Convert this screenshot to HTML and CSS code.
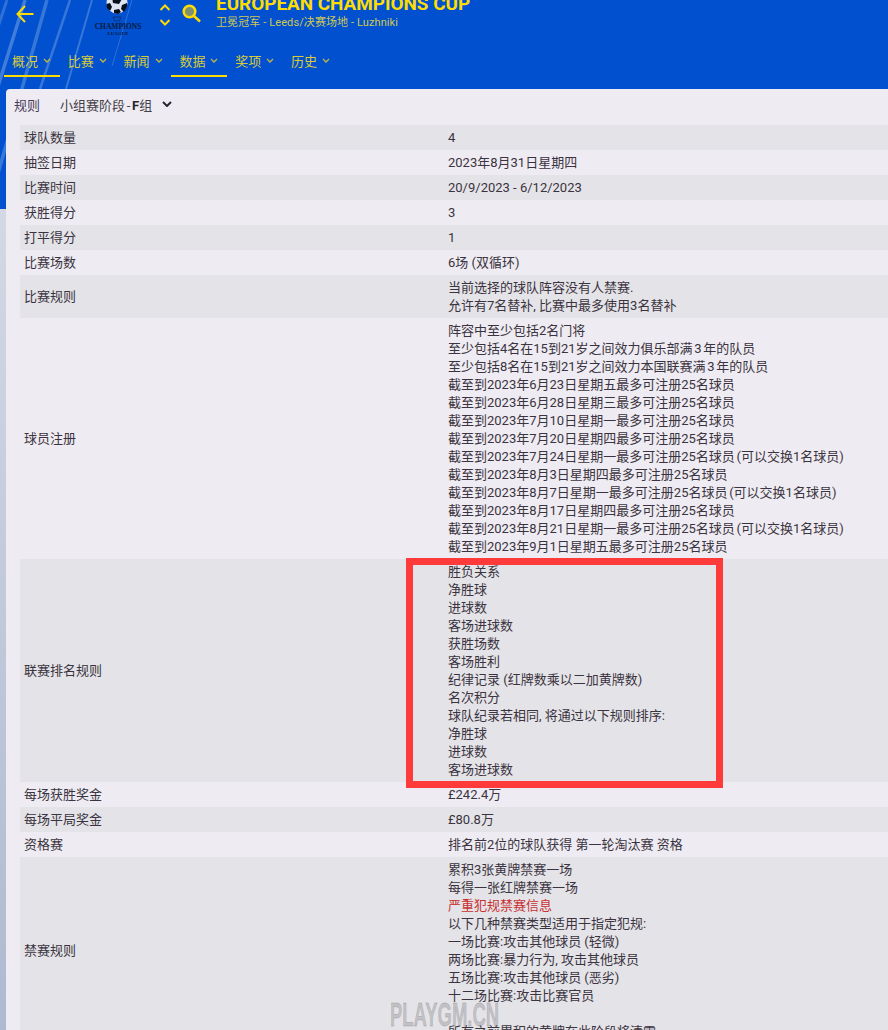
FILE: index.html
```html
<!DOCTYPE html>
<html lang="zh-CN">
<head>
  <meta charset="UTF-8">
  <title>European Champions Cup</title>
  <link rel="stylesheet" href="styles.css">
</head>
<body>
  <div class="page">
    <!-- 背景斜线 -->
    <svg class="stripes" width="200" height="209" viewBox="0 0 200 209">
      <g stroke="#9fc0e8" fill="none">
        <line x1="7" y1="0" x2="-3" y2="30" stroke-width="3" opacity="0.3"/>
        <line x1="25" y1="0" x2="-25" y2="160" stroke-width="3.500" opacity="0.4"/>
        <line x1="47" y1="0" x2="-12" y2="209" stroke-width="3.500" opacity="0.35"/>
        <line x1="70" y1="0" x2="40" y2="89" stroke-width="2.500" opacity="0.35"/>
        <line x1="92" y1="0" x2="66" y2="89" stroke-width="2" opacity="0.35"/>
        <line x1="132" y1="0" x2="112" y2="66" stroke-width="1" opacity="0.3"/>
      </g>
    </svg>

    <header class="top">
      <div class="top-row">
        <svg class="back-icon" width="18" height="18" viewBox="0 0 18 18">
          <path d="M9 1 L1.500 9 L9 17 M1.500 9 H17.500" fill="none" stroke="#ffdc00" stroke-width="2"/>
        </svg>
        <svg class="logo" width="50" height="36" viewBox="0 0 50 36">
          <circle cx="23" cy="3" r="10.500" fill="#dfe5f0"/>
          <path d="M18 -3 l6 -2 l4 4 l-3 5 l-6 -1 z" fill="#0a0f1e"/>
          <path d="M12.500 4 l3.500 -1 l2 4 l-2 4 l-3 -3 z" fill="#0a0f1e"/>
          <path d="M28 5 l5 -2 l0 4 l-3 5 l-3 -3 z" fill="#0a0f1e"/>
          <path d="M20 10 l5 -1 l2 3 l-3 2 l-4 -1 z" fill="#0a0f1e"/>
          <path d="M19 17 h8 l-1.500 4 h-5 z" fill="none" stroke="#1a2a55" stroke-width="0.700"/>
          <text class="logo-big" x="24" y="29" text-anchor="middle">CHAMPIONS</text>
          <text class="logo-small" x="24" y="34.500" text-anchor="middle">LEAGUE</text>
        </svg>
        <svg class="updown" width="12" height="22" viewBox="0 0 12 22">
          <path d="M1.500 6 L6 1.500 L10.500 6 M1.500 16 L6 20.500 L10.500 16" fill="none" stroke="#ffdc00" stroke-width="2"/>
        </svg>
        <svg class="search-icon" width="19" height="19" viewBox="0 0 19 19">
          <circle cx="7.500" cy="7.500" r="5.800" fill="#7f9070" stroke="#ffdc00" stroke-width="2.500"/>
          <line x1="12" y1="12" x2="18" y2="17.500" stroke="#ffdc00" stroke-width="2.500"/>
        </svg>
        <div class="title-box">
          <div class="title">EUROPEAN CHAMPIONS CUP</div>
          <div class="subtitle">卫冕冠军 - Leeds/决赛场地 - Luzhniki</div>
        </div>
      </div>
      <nav class="tabs">
        <div class="tab active">概况<svg class="chev" width="8" height="5" viewBox="0 0 8 5"><path d="M1 1 L4 4 L7 1" /></svg></div>
        <div class="tab">比赛<svg class="chev" width="8" height="5" viewBox="0 0 8 5"><path d="M1 1 L4 4 L7 1" /></svg></div>
        <div class="tab">新闻<svg class="chev" width="8" height="5" viewBox="0 0 8 5"><path d="M1 1 L4 4 L7 1" /></svg></div>
        <div class="tab active">数据<svg class="chev" width="8" height="5" viewBox="0 0 8 5"><path d="M1 1 L4 4 L7 1" /></svg></div>
        <div class="tab">奖项<svg class="chev" width="8" height="5" viewBox="0 0 8 5"><path d="M1 1 L4 4 L7 1" /></svg></div>
        <div class="tab">历史<svg class="chev" width="8" height="5" viewBox="0 0 8 5"><path d="M1 1 L4 4 L7 1" /></svg></div>
      </nav>
    </header>

    <main class="card">
      <div class="card-head">
        <span class="card-label">规则</span>
        <span class="stage">小组赛阶段 - <b>F</b>组</span>
        <svg class="stage-chev" width="10" height="6" viewBox="0 0 10 6"><path d="M1 1 L5 5 L9 1" fill="none" stroke="#2a2530" stroke-width="2"/></svg>
      </div>

      <div class="rules">
        <div class="row"><div>球队数量</div><div>4</div></div>
        <div class="row"><div>抽签日期</div><div>2023年8月31日星期四</div></div>
        <div class="row"><div>比赛时间</div><div>20/9/2023 - 6/12/2023</div></div>
        <div class="row"><div>获胜得分</div><div>3</div></div>
        <div class="row"><div>打平得分</div><div>1</div></div>
        <div class="row"><div>比赛场数</div><div>6场 (双循环)</div></div>
        <div class="row">
          <div>比赛规则</div>
          <div>当前选择的球队阵容没有人禁赛.<br>允许有7名替补, 比赛中最多使用3名替补</div>
        </div>
        <div class="row">
          <div>球员注册</div>
          <div>
            阵容中至少包括2名门将<br>
            <span class="tight">至少包括4名在15到21岁之间效力俱乐部满 3 年的队员</span><br>
            <span class="tight">至少包括8名在15到21岁之间效力本国联赛满 3 年的队员</span><br>
            截至到2023年6月23日星期五最多可注册25名球员<br>
            截至到2023年6月28日星期三最多可注册25名球员<br>
            截至到2023年7月10日星期一最多可注册25名球员<br>
            截至到2023年7月20日星期四最多可注册25名球员<br>
            <span class="tight">截至到2023年7月24日星期一最多可注册25名球员 (可以交换1名球员)</span><br>
            截至到2023年8月3日星期四最多可注册25名球员<br>
            <span class="tight">截至到2023年8月7日星期一最多可注册25名球员 (可以交换1名球员)</span><br>
            截至到2023年8月17日星期四最多可注册25名球员<br>
            <span class="tight">截至到2023年8月21日星期一最多可注册25名球员 (可以交换1名球员)</span><br>
            截至到2023年9月1日星期五最多可注册25名球员
          </div>
        </div>
        <div class="row">
          <div>联赛排名规则</div>
          <div>
            胜负关系<br>
            净胜球<br>
            进球数<br>
            客场进球数<br>
            获胜场数<br>
            客场胜利<br>
            纪律记录 (红牌数乘以二加黄牌数)<br>
            名次积分<br>
            球队纪录若相同, 将通过以下规则排序:<br>
            净胜球<br>
            进球数<br>
            客场进球数
          </div>
        </div>
        <div class="row"><div>每场获胜奖金</div><div>£242.4万</div></div>
        <div class="row"><div>每场平局奖金</div><div>£80.8万</div></div>
        <div class="row"><div>资格赛</div><div>排名前2位的球队获得 第一轮淘汰赛 资格</div></div>
        <div class="row">
          <div>禁赛规则</div>
          <div>
            累积3张黄牌禁赛一场<br>
            每得一张红牌禁赛一场<br>
            <span class="red-link">严重犯规禁赛信息</span><br>
            以下几种禁赛类型适用于指定犯规:<br>
            一场比赛:攻击其他球员 (轻微)<br>
            两场比赛:暴力行为, 攻击其他球员<br>
            五场比赛:攻击其他球员 (恶劣)<br>
            十二场比赛:攻击比赛官员<br>
            <br>
            所有之前累积的黄牌在此阶段将清零
          </div>
        </div>
      </div>
    </main>

    <!-- 红框标注 + 水印 -->
    <div class="red-box"></div>
    <div class="watermark">PLAYGM.CN</div>
  </div>
</body>
</html>
```

FILE: styles.css
```css
* {
  box-sizing: border-box;
}
html, body {
  margin: 0;
  padding: 0;
}
body {
  font-family: Roboto, "Noto Sans CJK SC", sans-serif;
  font-size: 13px;
  color: #3b3340;
}
.page {
  position: relative;
  width: 888px;
  height: 1030px;
  overflow: hidden;
  background: linear-gradient(180deg, #0050d0 0, #0050d0 209px, #d3d8e4 209px, #aebad0 100%);
}
.stripes {
  position: absolute;
  left: 0;
  top: 0;
}

/* 顶部 */
.top {
  position: relative;
  height: 89px;
}
.top-row {
  display: flex;
  align-items: flex-start;
  height: 45px;
  padding-left: 16px;
}
.back-icon {
  margin-top: 5px;
}
.logo {
  margin-left: 60px;
}
.logo-big {
  font-family: "Liberation Serif", serif;
  font-size: 7.500px;
  font-weight: bold;
  fill: #0a1a3c;
}
.logo-small {
  font-family: "Liberation Serif", serif;
  font-size: 5px;
  font-weight: bold;
  fill: #0a1a3c;
}
.updown {
  margin-left: 15px;
  margin-top: 4px;
}
.search-icon {
  margin-left: 11px;
  margin-top: 4px;
}
.title-box {
  margin-left: 15px;
  margin-top: -7px;
}
.title {
  font-size: 18.900px;
  font-weight: bold;
  line-height: 22px;
  color: #ffdc00;
  white-space: nowrap;
}
.subtitle {
  font-size: 11px;
  line-height: 14px;
  margin-top: 1px;
  letter-spacing: 0.100px;
  color: #cfc850;
  white-space: nowrap;
}
.tabs {
  display: flex;
  padding-left: 4px;
}
.tab {
  display: flex;
  align-items: center;
  width: 55.800px;
  height: 32px;
  padding-left: 8px;
  padding-top: 1px;
  gap: 5px;
  color: #d8cc38;
  border-bottom: 2px solid transparent;
}
.tab.active {
  border-bottom-color: #ffdc00;
}
.chev path {
  fill: none;
  stroke: #c0b840;
  stroke-width: 1.300;
}

/* 内容卡片 */
.card {
  position: relative;
  margin-left: 6px;
  background: #eeecf2;
  border-top-left-radius: 4px;
}
.card-head {
  display: flex;
  align-items: center;
  height: 36px;
  padding-left: 8px;
  padding-bottom: 6px;
}
.card-label {
  width: 46px;
  color: #4a3a5a;
}
.stage {
  color: #444048;
  word-spacing: -1.500px;
}
.stage b {
  color: #2a2530;
}
.stage-chev {
  margin-left: 10px;
}
.rules {
  margin-left: 14px;
}
.row {
  display: grid;
  grid-template-columns: 424px 1fr;
  align-items: center;
  padding: 3.500px 4px;
  line-height: 18px;
}
.row:nth-child(odd) {
  background: #e4e3e8;
}
.tight {
  word-spacing: -1.500px;
}
.red-link {
  color: #c83030;
}

/* 叠加层 */
.red-box {
  position: absolute;
  left: 406px;
  top: 558px;
  width: 317px;
  height: 230px;
  border: 7px solid #ff3a3a;
}
.watermark {
  position: absolute;
  left: 390px;
  top: 998px;
  font-family: "Liberation Sans", sans-serif;
  font-size: 33px;
  line-height: 34px;
  font-weight: bold;
  color: rgba(120, 120, 120, 0.32);
  -webkit-text-stroke: 0.800px rgba(120, 120, 120, 0.32);
  transform: scaleX(0.56);
  transform-origin: left center;
}
```
